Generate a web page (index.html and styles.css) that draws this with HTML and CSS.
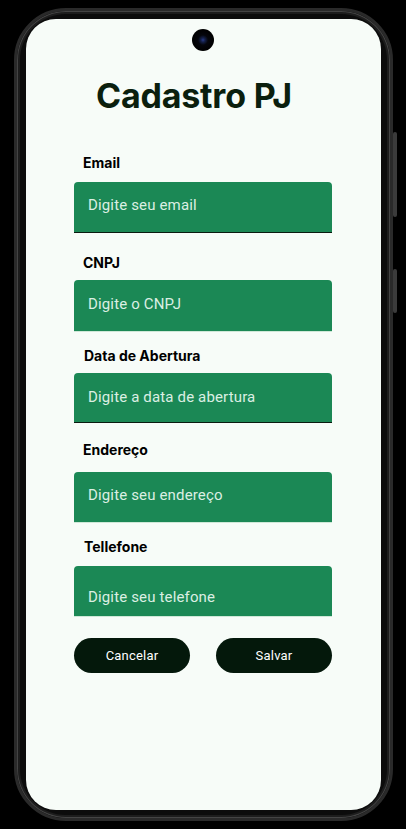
FILE: index.html
```html
<!DOCTYPE html>
<html lang="pt-BR">
<head>
<meta charset="utf-8">
<title>Cadastro PJ</title>
<link rel="stylesheet" href="styles.css">
</head>
<body>
<div class="phone">
  <span class="side-btn side-btn-power"></span>
  <span class="side-btn side-btn-volume"></span>
  <div class="screen">
    <span class="camera"></span>
    <h1 class="title">Cadastro PJ</h1>

    <label class="label label-email">Email</label>
    <div class="input input-email underline-dark"><span class="placeholder">Digite seu email</span></div>

    <label class="label label-cnpj">CNPJ</label>
    <div class="input input-cnpj"><span class="placeholder">Digite o CNPJ</span></div>

    <label class="label label-data">Data de Abertura</label>
    <div class="input input-data underline-dark"><span class="placeholder">Digite a data de abertura</span></div>

    <label class="label label-endereco">Endereço</label>
    <div class="input input-endereco"><span class="placeholder">Digite seu endereço</span></div>

    <label class="label label-telefone">Tellefone</label>
    <div class="input input-telefone"><span class="placeholder">Digite seu telefone</span></div>

    <div class="actions">
      <button class="btn">Cancelar</button>
      <button class="btn">Salvar</button>
    </div>
  </div>
</div>
</body>
</html>
```
FILE: styles.css
```css
* { box-sizing: border-box; }

html, body {
  margin: 0;
  padding: 0;
  background: #000;
  width: 406px;
  height: 829px;
  overflow: hidden;
}

.phone {
  position: relative;
  margin: 8px 0 0 14px;
  width: 379px;
  height: 813px;
  border: 3px solid #2a2a2a;
  border-radius: 52px;
  background: #0c0c0c;
  box-shadow: inset 0 0 0 1px #444, inset 0 0 0 3px #1d1d1d;
  padding: 8px 9px;
}

.side-btn {
  position: absolute;
  right: -7px;
  width: 4px;
  background: #3b3b3b;
  border-radius: 2px;
}
.side-btn-power { top: 121px; height: 85px; }
.side-btn-volume { top: 258px; height: 44px; }

.screen {
  position: relative;
  height: 100%;
  border-radius: 30px;
  background: #f7fcf8;
  overflow: hidden;
  display: flex;
  flex-direction: column;
  padding: 0 49px 0 48px;
}

.camera {
  position: absolute;
  left: 166px;
  top: 10px;
  width: 22px;
  height: 22px;
  border-radius: 50%;
  background: radial-gradient(circle at 50% 50%, #2a3c8a 0, #14204a 2px, #05060c 5px, #000 11px);
}

.title {
  margin: 57px 0 0 22px;
  font-family: Inter, "Noto Sans", sans-serif;
  font-weight: 700;
  font-size: 34px;
  line-height: 40px;
  color: #0b1f0e;
  letter-spacing: -0.2px;
}

.label {
  display: block;
  font-family: Inter, "Liberation Sans", sans-serif;
  font-weight: 700;
  font-size: 14px;
  line-height: 17px;
  color: #000;
  padding-left: 9px;
}
.label-email { margin-top: 38px; }
.label-cnpj { margin-top: 21px; }
.label-data { margin-top: 15px; padding-left: 10px; }
.label-endereco { margin-top: 18px; }
.label-telefone { margin-top: 15px; padding-left: 10px; }

.input {
  display: flex;
  align-items: flex-start;
  background: #1b8855;
  border-radius: 4px 4px 0 0;
  border-bottom: 1px solid #cfe8d8;
  padding-left: 14px;
}
.input.underline-dark { border-bottom-color: #0a1a10; }

.placeholder {
  font-family: Roboto, "Noto Sans", sans-serif;
  font-size: 15px;
  line-height: 20px;
  color: #dbefe3;
  letter-spacing: 0.15px;
}

.input-email { margin-top: 11px; height: 51px; padding-top: 13px; }
.input-cnpj { margin-top: 9px; height: 52px; padding-top: 14px; }
.input-data { margin-top: 9px; height: 50px; padding-top: 14px; }
.input-endereco { margin-top: 14px; height: 51px; padding-top: 13px; }
.input-telefone { margin-top: 11px; height: 51px; padding-top: 21px; }

.actions {
  display: flex;
  justify-content: space-between;
  margin-top: 21px;
  padding-right: 0;
}

.btn {
  width: 116px;
  height: 35px;
  border: none;
  border-radius: 18px;
  background: #04180b;
  color: #fff;
  font-family: Roboto, "Noto Sans", sans-serif;
  font-weight: 400;
  font-size: 13px;
  letter-spacing: 0.2px;
  padding: 0;
}
```
